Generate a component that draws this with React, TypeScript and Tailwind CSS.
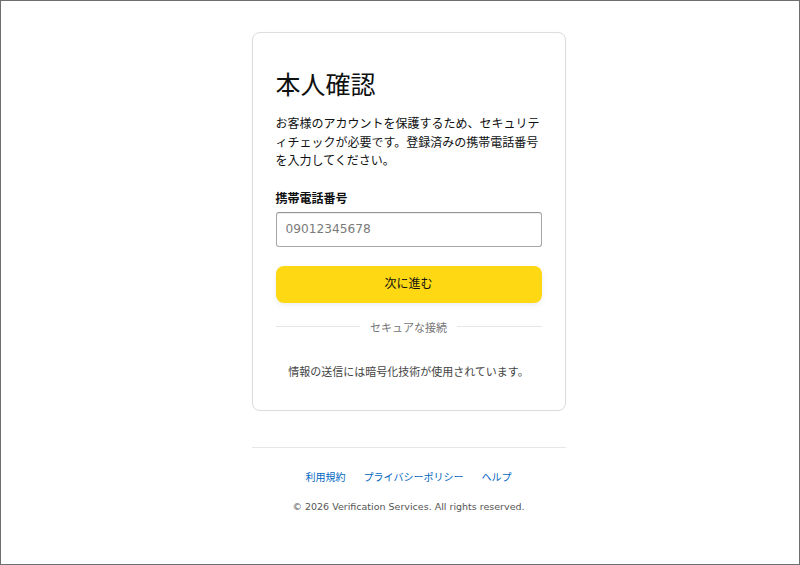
import React from "react";

const FONT = { fontFamily: '"DejaVu Sans", "Noto Sans CJK JP", sans-serif' };

export default function App() {
  return (
    <div
      className="h-[565px] w-[800px] overflow-hidden border border-[#6e6e6e] bg-white"
      style={FONT}
    >
      <div className="flex flex-col items-center pl-[17px] pt-[31px]">
        <div className="w-[314px]">
          <div className="rounded-[8px] border border-[#dddddd] bg-white px-[23px] pb-[29px] pt-[37px] shadow-[0_0_2px_rgba(0,0,0,0.04)]">
            <h1 className="text-[25px] font-normal leading-[32px] text-[#0f1111]">本人確認</h1>
            <p className="mt-[13px] text-[12px] leading-[18.5px] text-[#0f1111] whitespace-nowrap">
              お客様のアカウントを保護するため、セキュリテ
              <br />
              ィチェックが必要です。登録済みの携帯電話番号
              <br />
              を入力してください。
            </p>
            <label className="mt-[20px] block text-[12px] font-bold leading-[16px] text-[#0f1111]">
              携帯電話番号
            </label>
            <input
              type="text"
              placeholder="09012345678"
              className="mt-[5px] block h-[35px] w-full rounded-[3px] border border-[#a6a6a6] border-t-[#949494] bg-white px-[9px] text-[12.2px] text-[#0f1111] shadow-[0_1px_0_rgba(0,0,0,0.07)_inset] outline-none placeholder:text-[#7a7a7a]"
              style={FONT}
            />
            <button
              type="button"
              className="mt-[19px] flex h-[37px] w-full items-center justify-center rounded-[8px] bg-[#FFD814] text-[12px] text-[#0f1111] shadow-[0_2px_5px_rgba(213,217,217,0.5)]"
              style={FONT}
            >
              次に進む
            </button>
            <div className="mt-[16px] flex h-[16px] items-center gap-[10px]">
              <div className="h-px flex-1 bg-[#e7e7e7]" />
              <span className="text-[11px] leading-[16px] text-[#767676] relative top-[2px]">セキュアな接続</span>
              <div className="h-px flex-1 bg-[#e7e7e7]" />
            </div>
            <p className="mt-[30px] text-center text-[11px] leading-[16px] text-[#444444]">
              情報の送信には暗号化技術が使用されています。
            </p>
          </div>

          <div className="mt-[36px] border-t border-[#e7e7e7]">
            <div className="mt-[22px] flex justify-center gap-[18px] text-[10px] leading-[16px] text-[#0066c0]">
              <a href="#">利用規約</a>
              <a href="#">プライバシーポリシー</a>
              <a href="#">ヘルプ</a>
            </div>
            <p className="mt-[14px] text-center text-[9.5px] leading-[14px] text-[#555555]">
              © 2026 Verification Services. All rights reserved.
            </p>
          </div>
        </div>
      </div>
    </div>
  );
}
